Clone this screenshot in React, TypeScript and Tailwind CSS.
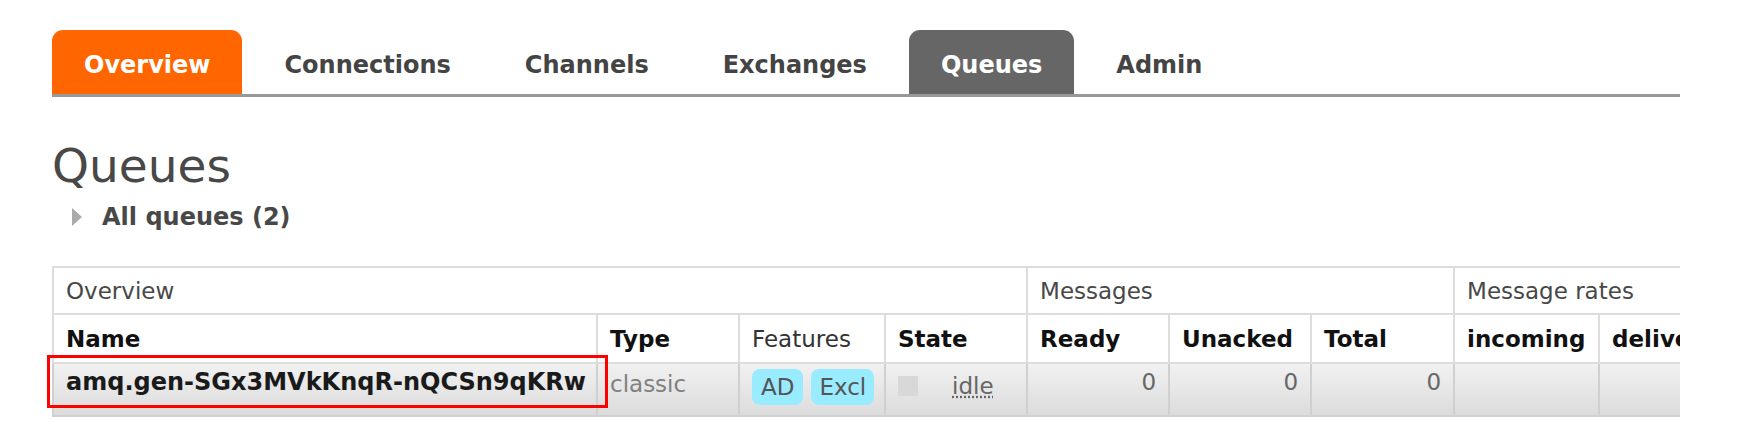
import React from "react";

const tabs = ["Overview", "Connections", "Channels", "Exchanges", "Queues", "Admin"];

function tabClass(name: string) {
  if (name === "Overview") return "bg-[#ff6600] text-white";
  if (name === "Queues") return "bg-[#666666] text-white";
  return "text-[#444444]";
}

export default function App() {
  const th = "border-2 border-[#dddddd] px-[12px] text-left align-middle";
  const td =
    "border-2 border-[#d0d0d0] px-[12px] pt-[4px] align-top bg-linear-to-b from-[#f1f1f1] to-[#dcdcdc]";

  return (
    <div className="min-h-[442px] bg-white pl-[52px] pt-[30px] font-['DejaVu_Sans',sans-serif] text-[#484848]">
      <div className="w-[1628px]">
        {/* tab menu */}
        <ul className="flex gap-[10px] border-b-[3px] border-[#999999]">
          {tabs.map((t) => (
            <li
              key={t}
              className={`flex h-[64px] items-center rounded-t-[11px] px-[32px] pt-[6px] text-[24px] leading-none font-bold ${tabClass(t)}`}
            >
              {t}
            </li>
          ))}
        </ul>

        <h1 className="mt-[45px] text-[47px] leading-none font-normal text-[#484848]">Queues</h1>

        <div className="mt-[16px] flex items-center">
          <svg width="10" height="18" viewBox="0 0 10 18" className="ml-[20px]">
            <polygon points="0,0 10,9 0,18" fill="#aaaaaa" />
          </svg>
          <h2 className="ml-[20px] text-[24px] leading-[24px] font-bold text-[#484848]">All queues (2)</h2>
        </div>

        {/* queue table, clipped at the page edge */}
        <div className="mt-[37px] -ml-[12px] w-[1640px] overflow-hidden pl-[12px]">
          <table className="w-[1720px] table-fixed border-collapse text-[23px] leading-[28px]">
            <colgroup>
              <col className="w-[544px]" />
              <col className="w-[142px]" />
              <col className="w-[146px]" />
              <col className="w-[142px]" />
              <col className="w-[142px]" />
              <col className="w-[142px]" />
              <col className="w-[143px]" />
              <col className="w-[145px]" />
              <col className="w-[174px]" />
            </colgroup>
            <thead>
              <tr className="h-[47px]">
                <th colSpan={4} className={`${th} font-normal text-[#484848]`}>
                  Overview
                </th>
                <th colSpan={3} className={`${th} font-normal text-[#484848]`}>
                  Messages
                </th>
                <th colSpan={2} className={`${th} border-r-0 font-normal text-[#484848]`}>
                  Message rates
                </th>
              </tr>
              <tr className="h-[49px] text-[#111111]">
                <th className={`${th} font-bold`}>Name</th>
                <th className={`${th} font-bold`}>Type</th>
                <th className={`${th} font-normal text-[#333333]`}>Features</th>
                <th className={`${th} font-bold`}>State</th>
                <th className={`${th} font-bold`}>Ready</th>
                <th className={`${th} font-bold`}>Unacked</th>
                <th className={`${th} font-bold`}>Total</th>
                <th className={`${th} font-bold`}>incoming</th>
                <th className={`${th} border-r-0 font-bold whitespace-nowrap`}>deliver / get</th>
              </tr>
            </thead>
            <tbody>
              <tr className="h-[53px]">
                <td className={`${td} relative text-[24px] font-bold whitespace-nowrap text-[#1a1a1a]`}>
                  amq.gen-SGx3MVkKnqR-nQCSn9qKRw
                  <div className="pointer-events-none absolute top-[-9px] left-[-7px] h-[53px] w-[561px] border-[3px] border-[#ff0000]" />
                </td>
                <td className={`${td} px-[10px] pt-[6px] text-[#808080]`}>classic</td>
                <td className={`${td} pt-[5px]`}>
                  <div className="flex gap-[8px]">
                    <span className="rounded-[8px] bg-[#99ebff] px-[9px] py-[4px] text-[#555555]">AD</span>
                    <span className="rounded-[8px] bg-[#99ebff] px-[8px] py-[4px] text-[#555555]">Excl</span>
                  </div>
                </td>
                <td className={`${td} px-[10px] pt-[8px]`}>
                  <div className="flex items-start">
                    <span className="mt-[4px] h-[20px] w-[20px] bg-[#d8d8d8]" />
                    <abbr className="ml-[34px] text-[#666666]" style={{ textDecoration: "underline dotted" }}>
                      idle
                    </abbr>
                  </div>
                </td>
                <td className={`${td} text-right text-[#666666]`}>0</td>
                <td className={`${td} text-right text-[#666666]`}>0</td>
                <td className={`${td} text-right text-[#666666]`}>0</td>
                <td className={td}></td>
                <td className={`${td} border-r-0`}></td>
              </tr>
            </tbody>
          </table>
        </div>
      </div>
    </div>
  );
}
